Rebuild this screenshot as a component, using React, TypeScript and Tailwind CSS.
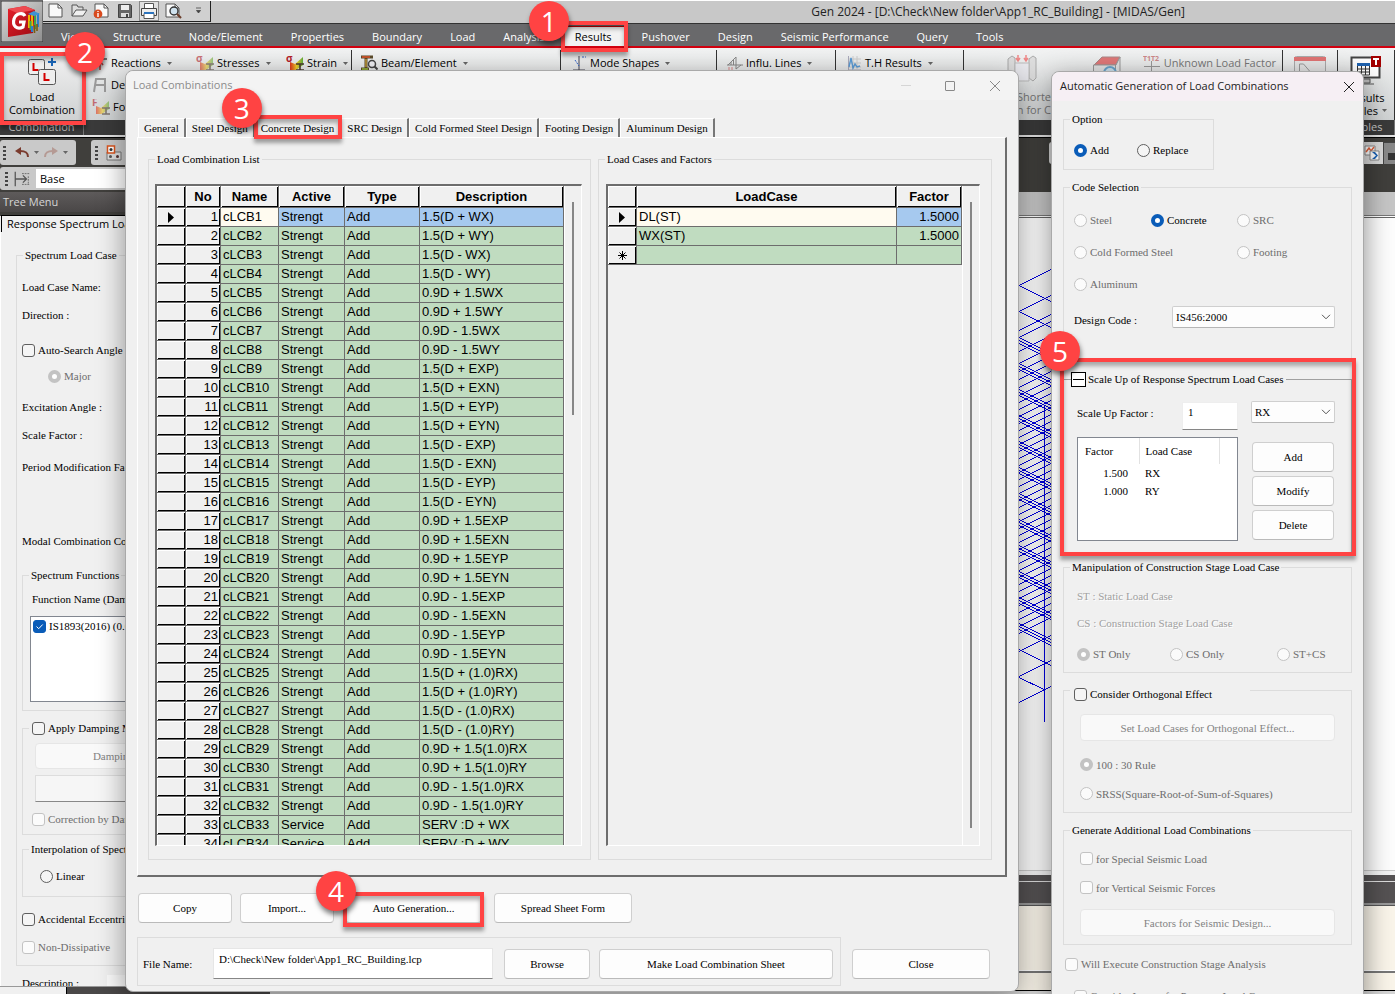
import React from "react";

const SERIF = "font-['Liberation_Serif',serif]";
const UI = "font-['Open_Sans',sans-serif]";
const GRID = "font-['Liberation_Sans',sans-serif]";

/* ---------- shared controls ---------- */

interface CalloutProps {
  n: number;
  box: string;
  badge: string;
}

const Callout: React.FC<CalloutProps> = ({ n, box, badge }) => (
  <div
    className={`pointer-events-none absolute z-30 border-4 border-[#ff4343] shadow-[0_4px_4px_rgba(0,0,0,0.35),inset_0_4px_4px_rgba(0,0,0,0.3)] ${box}`}
  >
    <span
      className={`absolute flex size-10 items-center justify-center rounded-full bg-[#ff4343] font-['Open_Sans',sans-serif] text-[28px] leading-none text-white shadow-[1px_4px_5px_rgba(0,0,0,0.5)] ${badge}`}
    >
      {n}
    </span>
  </div>
);

interface CheckProps {
  label: string;
  type?: "radio" | "checkbox";
  name?: string;
  checked?: boolean;
  disabled?: boolean;
  className?: string;
}

const Check: React.FC<CheckProps> = ({
  label,
  type = "checkbox",
  name,
  checked,
  disabled,
  className = "",
}) => {
  const shape =
    type === "radio"
      ? "rounded-full checked:border-4 checked:bg-white"
      : "rounded-[3px] checked:bg-[#0a5cb8]";
  const tone = disabled
    ? "border-[#c3c3c3] bg-[#fbfbfb]"
    : "border-[#5f5f5f] bg-[#f5f5f5] checked:border-[#0a5cb8]";
  return (
    <label
      className={`flex h-4 items-center gap-[3px] whitespace-nowrap ${disabled ? "text-[#6d6d6d]" : "text-black"} ${className}`}
    >
      <span className="relative flex">
        <input
          type={type}
          name={name}
          defaultChecked={checked}
          disabled={disabled}
          className={`size-[13px] shrink-0 appearance-none border ${shape} ${tone}`}
        />
        {type === "checkbox" && checked && (
          <svg viewBox="0 0 13 13" className="absolute inset-0 size-[13px]">
            <path d="M3.5 6.5l2.2 2.2 4-4.2" fill="none" stroke="#fff" />
          </svg>
        )}
      </span>
      {label}
    </label>
  );
};

const PushButton: React.FC<{
  children: React.ReactNode;
  disabled?: boolean;
  className?: string;
}> = ({ children, disabled, className = "" }) => (
  <button
    type="button"
    disabled={disabled}
    className={`rounded-[4px] border text-center whitespace-nowrap ${
      disabled
        ? "border-[#e6e6e6] bg-[#f9f9f9] text-[#838383]"
        : "border-[#cfcfcf] border-b-[#bababa] bg-[#fdfdfd]"
    } ${className}`}
  >
    {children}
  </button>
);

const Group: React.FC<{
  title: React.ReactNode;
  className?: string;
  legend?: string;
  body?: string;
  children?: React.ReactNode;
}> = ({ title, className = "", legend = "", body = "", children }) => (
  <fieldset className={`min-w-0 border border-[#dcdcdc] ${className}`}>
    <legend className={`ml-[6px] px-[2px] leading-4 whitespace-nowrap ${legend}`}>
      {title}
    </legend>
    <div className={body}>{children}</div>
  </fieldset>
);

const Dropdown: React.FC<{ label: string; value: string; className?: string }> = ({
  label,
  value,
  className = "",
}) => (
  <span className={`relative flex ${className}`}>
    <select
      aria-label={label}
      className="h-[22px] w-full appearance-none rounded-[2px] border border-[#cfcfcf] border-b-[#b5b5b5] bg-[#fdfdfd] pl-[3px]"
    >
      <option>{value}</option>
    </select>
    <svg viewBox="0 0 10 6" className="absolute top-2 right-1 h-[6px] w-[10px]">
      <path d="M1 .8l4 4 4-4" fill="none" stroke="#555" />
    </svg>
  </span>
);

const Arrow: React.FC<{ className?: string }> = ({ className = "" }) => (
  <svg viewBox="0 0 5 3" className={`h-[3px] w-[5px] shrink-0 ${className}`}>
    <path d="M0 0h5L2.5 3z" fill="#666" />
  </svg>
);

/* ---------- main window ---------- */

const AppLogo = () => (
  <svg viewBox="0 0 42 41" className="h-[41px] w-[42px]">
    <defs>
      <linearGradient id="logoBg" x1="0" y1="0" x2="1" y2="1">
        <stop offset="0" stopColor="#dcdcdc" />
        <stop offset="1" stopColor="#8e8e8e" />
      </linearGradient>
      <linearGradient id="logoRed" x1="0" y1="0" x2="1" y2="1">
        <stop offset="0" stopColor="#e5202b" />
        <stop offset="1" stopColor="#9d0c14" />
      </linearGradient>
    </defs>
    <rect width="42" height="41" fill="url(#logoBg)" stroke="#333" />
    <path d="M7 8l17-3 10 4-2 23-25 4z" fill="url(#logoRed)" />
    <path d="M7 8l17-3 10 4-18 3z" fill="#ee4a50" />
    <path
      d="M24 15c-2-4-9-3-11 3-2 7 3 11 9 8l1-5h-5"
      fill="none"
      stroke="#fff"
      strokeWidth="3.2"
    />
    <path d="M28 14v13M31 12v14" stroke="#f0b400" strokeWidth="2" />
    <path d="M34 11v17M29.500 20v9" stroke="#3da34a" strokeWidth="2" />
    <path d="M37 12v14M31 25v6" stroke="#2a7fd0" strokeWidth="2" />
    <path d="M33.500 24v8M36 23v7" stroke="#7a5a10" strokeWidth="1.600" />
    <path d="M27 13l6-3 6 3-6 2z" fill="#3f93d4" />
  </svg>
);

const FilePage: React.FC<{ children?: React.ReactNode }> = ({ children }) => (
  <svg viewBox="0 0 18 16" className="h-4 w-[18px]">
    <path d="M2 1h9l4 4v9H2z" fill="#fafafa" stroke="#555" />
    <path d="M11 1v4h4" fill="none" stroke="#555" />
    {children}
  </svg>
);

const QuickAccess = () => (
  <div className="flex h-[21px] items-start gap-[5px] border-r border-b border-[#222] bg-[#d0d0d0] pt-[2px] pr-2 pl-[4px]">
    <FilePage />
    <svg viewBox="0 0 18 16" className="h-4 w-[18px]">
      <path d="M2 13V2h5l1 2h5v3" fill="#ddd" stroke="#555" />
      <path d="M2 13l4-6h11l-4 6z" fill="#f0f0f0" stroke="#555" />
    </svg>
    <FilePage>
      <circle cx="5" cy="11" r="4.4" fill="#d94a1e" />
      <path d="M5 10v4M5 8v1" stroke="#fff" strokeWidth="1.4" />
    </FilePage>
    <svg viewBox="0 0 18 16" className="h-4 w-[18px]">
      <path d="M2.500 1.500h12l1 1v12h-13z" fill="#666" stroke="#444" />
      <path d="M5 2h8v5H5z" fill="#eee" />
      <path d="M5 10h8v4H5z" fill="#ddd" />
      <path d="M10 11h2v3h-2z" fill="#444" />
    </svg>
    <span className="-my-[2px] flex h-5 border border-[#888] bg-[#e0e0e0] pt-px">
      <svg viewBox="0 0 18 16" className="h-4 w-[18px]">
        <path d="M4.500 5.500v-5h9v5" fill="#fff" stroke="#555" />
        <path d="M1.500 5.500h15v7h-15z" fill="#eee" stroke="#444" />
        <path d="M4 10.500h10v5H4z" fill="#fff" stroke="#555" />
        <path d="M4 9h10v2H4z" fill="#2b73bd" />
      </svg>
    </span>
    <FilePage>
      <circle cx="10" cy="8" r="4" fill="#cfe2ee" stroke="#333" strokeWidth="1.4" />
      <path d="M13 11l4 4" stroke="#6b3d2a" strokeWidth="2.2" />
    </FilePage>
    <svg viewBox="0 0 7 7" className="mt-[4px] ml-2 h-[7px] w-[7px]">
      <path d="M1 1h5M1.500 3.500h4L3.500 6z" fill="#444" stroke="#444" strokeWidth=".8" />
    </svg>
  </div>
);

const menuTabs = [
  "View",
  "Structure",
  "Node/Element",
  "Properties",
  "Boundary",
  "Load",
  "Analysis",
  "Results",
  "Pushover",
  "Design",
  "Seismic Performance",
  "Query",
  "Tools",
];

const TitleArea = () => (
  <header className="relative z-[1] flex h-12 shrink-0 border-b-2 border-[#d2000f] bg-[#69696b]">
    <div className="h-[43px] shrink-0 pt-px pl-px">
      <AppLogo />
    </div>
    <div className="min-w-0 flex-1">
      <div className="flex h-6 border-t border-b border-t-white border-b-[#333] bg-[#c8c8c8]">
        <QuickAccess />
        <h1 className="ml-auto pt-[2px] pr-[210px] text-[12px] leading-[18px] whitespace-nowrap text-[#222]">
          Gen 2024 - [D:\Check\New folder\App1_RC_Building] - [MIDAS/Gen]
        </h1>
      </div>
      <nav className="flex h-[22px] items-stretch pl-1 text-[11px] text-white">
        {menuTabs.map((tab) =>
          tab === "Results" ? (
            <div key={tab} className="relative mx-1 pt-[2px]">
              <button
                type="button"
                className="h-full border-t border-[#b00] bg-[#f2f2f2] px-3 pt-px text-black"
              >
                {tab}
              </button>
              <Callout
                n={1}
                box="-left-[2px] -right-1 -top-[3px] h-[31px]"
                badge="-left-9 -top-6"
              />
            </div>
          ) : (
            <button type="button" key={tab} className="px-[14px] pt-[4px] whitespace-nowrap">
              {tab}
            </button>
          )
        )}
      </nav>
    </div>
  </header>
);

const StressIcon: React.FC<{ letter: string; faded?: boolean }> = ({ letter, faded }) => (
  <svg viewBox="0 0 18 16" className={`h-4 w-[18px] ${faded ? "opacity-60" : ""}`}>
    <defs>
      <linearGradient id="stressRamp">
        <stop offset="0" stopColor="#e0301f" />
        <stop offset=".5" stopColor="#f4cf2a" />
        <stop offset="1" stopColor="#5fae3c" />
      </linearGradient>
    </defs>
    <path d="M4 7l5 2 8-7v8l-7 5H4z" fill="url(#stressRamp)" />
    <path d="M10 9h8M14 9v6M10 15h8" stroke="#4a3a2e" strokeWidth="1.600" />
    <text x="0" y="7" fontSize="10" fontWeight="bold" fill="#b3202a">
      {letter}
    </text>
  </svg>
);

const RibbonItem: React.FC<{
  icon: React.ReactNode;
  label: string;
  arrow?: boolean;
  className?: string;
}> = ({ icon, label, arrow = true, className = "" }) => (
  <button type="button" className={`flex h-[22px] items-center gap-[3px] whitespace-nowrap ${className}`}>
    {icon}
    {label}
    {arrow && <Arrow className="ml-[3px]" />}
  </button>
);

const RibbonGroup: React.FC<{
  className: string;
  title?: string;
  children?: React.ReactNode;
}> = ({ className, title, children }) => (
  <section className={`flex shrink-0 flex-col ${className}`}>
    <div className="mt-[2px] h-[70px] border-r border-[#333]">{children}</div>
    <h2 className="h-[15px] border-r border-[#777] bg-[#3a3a3a] text-center text-[11px] leading-[14px] text-[#c8c8c8]">
      {title}
    </h2>
  </section>
);

const Ribbon = () => (
  <div className="relative flex h-[87px] shrink-0 bg-linear-to-b from-[#f2f3f3] to-[#c9cccd] text-[11px]">
    <section className="relative flex w-[84px] shrink-0 flex-col">
      <button
        type="button"
        className="flex h-[72px] flex-col items-center bg-linear-to-b from-[#f4f4f4] to-[#cfd1d2] pt-[8px] leading-[13px]"
      >
        <svg viewBox="0 0 30 30" className="mb-[4px] h-[30px] w-[30px] shrink-0">
          <rect x="1.500" y="3.500" width="16" height="15" rx="2" fill="#eee" stroke="#555" />
          <path d="M6.500 7v7h5" fill="none" stroke="#d40000" strokeWidth="2" />
          <rect x="11.500" y="13.500" width="17" height="15" rx="2" fill="#eee" stroke="#555" />
          <path d="M17.500 17v7h5" fill="none" stroke="#d40000" strokeWidth="2" />
          <path d="M25 2v8M21 6h8" stroke="#1a66b8" strokeWidth="2" />
        </svg>
        <span>
          Load
          <br />
          Combination
        </span>
      </button>
      <h2 className="h-[15px] border-r border-[#777] bg-[#3a3a3a] text-center text-[11px] leading-[14px] text-[#c8c8c8]">
        Combination
      </h2>
      <Callout n={2} box="left-0 top-1 h-[73px] w-[86px]" badge="left-[61px] -top-6" />
    </section>
    <RibbonGroup className="w-[268px]">
      <div className="flex pt-[2px] pl-2">
        <div className="w-[104px]">
          <RibbonItem
            label="Reactions"
            icon={
              <svg viewBox="0 0 16 16" className="h-4 w-4">
                <path d="M2 4h13" stroke="#555" strokeWidth="1.5" />
                <path d="M8 15V7M5 10l3-4 3 4" fill="none" stroke="#c44" strokeWidth="1.600" />
              </svg>
            }
          />
          <RibbonItem
            label="Deformations"
            icon={
              <svg viewBox="0 0 16 16" className="h-4 w-4">
                <path d="M2 15l2-13h9v13M3 8h10" fill="none" stroke="#999" strokeWidth="2" />
              </svg>
            }
          />
          <RibbonItem label="Forces" icon={<StressIcon letter="F" faded />} />
        </div>
        <RibbonItem label="Stresses" className="w-[90px]" icon={<StressIcon letter="σ" faded />} />
        <RibbonItem label="Strain" icon={<StressIcon letter="σ" />} />
      </div>
    </RibbonGroup>
    <RibbonGroup className="w-[209px]">
      <RibbonItem
        label="Beam/Element"
        className="mt-[2px] ml-2"
        icon={
          <svg viewBox="0 0 18 16" className="h-4 w-[18px]">
            <path d="M1 2h12M1 14h8M6 2v12" stroke="#5b4a2a" strokeWidth="3" />
            <path d="M2 2h8" stroke="#e2552a" strokeWidth="1.500" />
            <path d="M2 14h6" stroke="#9bc23c" strokeWidth="1.500" />
            <path d="M6 4v8" stroke="#f0c040" />
            <circle cx="12" cy="9" r="3.500" fill="#f0f0f4" stroke="#444" strokeWidth="1.500" />
            <path d="M14.500 11.500l3 3" stroke="#444" strokeWidth="2" />
          </svg>
        }
      />
    </RibbonGroup>
    <RibbonGroup className="w-[156px]">
      <RibbonItem
        label="Mode Shapes"
        className="mt-[2px] ml-[10px]"
        icon={
          <svg viewBox="0 0 16 16" className="h-4 w-4">
            <path d="M8 1v14M2 15h12" stroke="#445" />
            <path d="M4 5l4 6M11 2h4" stroke="#36c" strokeDasharray="2 1" />
          </svg>
        }
      />
    </RibbonGroup>
    <RibbonGroup className="w-[119px]">
      <RibbonItem
        label="Influ. Lines"
        className="mt-[2px] ml-[10px]"
        icon={
          <svg viewBox="0 0 16 16" className="h-4 w-4">
            <path d="M0 10h16M1 10l8-8v12l5-4M4 7v3M6.500 5v5" fill="none" stroke="#888" />
            <path d="M2 12v4M5 12v4" stroke="#d88" />
          </svg>
        }
      />
    </RibbonGroup>
    <RibbonGroup className="w-[128px]">
      <RibbonItem
        label="T.H Results"
        className="mt-[2px] ml-[10px]"
        icon={
          <svg viewBox="0 0 16 16" className="h-4 w-4">
            <path d="M3 4h12M3 8h12M3 12h12M7 1v13M11 1v13" stroke="#ccc" />
            <path d="M2.500 1v14H15" fill="none" stroke="#aab" />
            <path d="M3 12l2-9 2 10 2-4 2 3 3-1" fill="none" stroke="#5b9bd5" strokeWidth="1.400" />
          </svg>
        }
      />
    </RibbonGroup>
    <RibbonGroup className="min-w-[319px] flex-1">
      <div className="flex pr-[6px] pl-[20px] text-[#777]">
        <div className="w-[67px] pt-[3px] text-right leading-[13px] whitespace-nowrap">
          <svg viewBox="0 0 32 32" className="mr-[13px] ml-auto block h-8 w-8">
            <path d="M2 6l4-3 3 2v20l-3 3-4-3zM23 6l4-3 3 2v20l-3 3-4-3z" fill="#ddd" stroke="#aaa" />
            <path d="M9 10h14v18H9z" fill="#e9e9ee" stroke="#bbb" />
            <path d="M12 2v6M20 2v6M10 5l2 3 2-3M18 5l2 3 2-3" fill="none" stroke="#e88" strokeWidth="1.500" />
          </svg>
          <p className="pt-[5px]">Shorte</p>
          <p>n for C</p>
        </div>
        <svg viewBox="0 0 32 32" className="mt-1 ml-10 h-8 w-8">
          <path d="M3 11l8-8h18l-4 8z" fill="#e07878" stroke="#a88" />
          <path d="M2.500 11h22v18h-22zM25 11l4-8v18" fill="#e4e4e4" stroke="#999" />
          <circle cx="19" cy="19" r="6" fill="#cfe4f0" stroke="#6aa5cc" strokeWidth="2" />
        </svg>
        <RibbonItem
          label="Unknown Load Factor"
          arrow={false}
          className="mt-[2px] ml-auto"
          icon={
            <svg viewBox="0 0 18 18" className="h-[18px] w-[18px]">
              <text x="0" y="7" fontSize="7" fill="#c88" fontWeight="bold">
                T1T2
              </text>
              <path d="M8.500 7v11M1 12.500h16" stroke="#999" />
            </svg>
          }
        />
      </div>
    </RibbonGroup>
    <RibbonGroup className="w-[55px]">
      <svg viewBox="0 0 32 32" className="mx-auto mt-[6px] block h-8 w-8">
        <rect x=".5" y=".5" width="31" height="31" rx="2" fill="#e6e6e6" stroke="#aaa" />
        <path d="M0 1h32v4H0z" fill="#e07474" />
        <path d="M5.500 8v16M5.500 8h4l6 7" fill="none" stroke="#999" />
      </svg>
    </RibbonGroup>
    <RibbonGroup className="w-[57px]" title="Tables">
      <div className="flex flex-col items-center pt-[5px] leading-[13px]">
        <svg viewBox="0 0 32 32" className="mb-[4px] h-8 w-8">
          <path d="M1.500 2.500h28v20h-28z" fill="#fff" stroke="#444" strokeWidth="2" />
          <path d="M12 24h8v4h-8zM8 29h16" fill="#bbb" stroke="#555" />
          <path d="M7 8h13v3H7z" fill="#1f63b0" />
          <path d="M7.500 11v9h12v-9M7 14h13M7 17h13M11.500 11v9M15.500 11v9" fill="none" stroke="#333" />
          <path d="M21 1h10v11H21z" fill="#a40000" />
          <path d="M23 4h6M26 4v6" stroke="#fff" strokeWidth="2" />
        </svg>
        <span>Results</span>
        <span className="flex items-center gap-1">
          Tables <Arrow />
        </span>
      </div>
    </RibbonGroup>
  </div>
);

const Grip = () => (
  <span className="flex w-[3px] flex-col gap-[2px]">
    <i className="h-[2px] bg-[#444]" />
    <i className="h-[2px] bg-[#444]" />
    <i className="h-[2px] bg-[#444]" />
    <i className="h-[2px] bg-[#444]" />
  </span>
);

const Toolbars = () => (
  <div className="shrink-0 border-t-2 border-[#e3e3e3] bg-[#403f3c] pb-[2px]">
    <div className="flex h-[30px] items-center justify-between border-t border-black">
      <div className="flex gap-[15px]">
        <div className="flex h-[25px] w-[76px] items-center gap-[5px] rounded-[3px] bg-[#c9c9c9] pl-[3px]">
          <Grip />
          <svg viewBox="0 0 14 11" className="ml-1 h-[11px] w-[14px]">
            <path d="M13 10c0-5-3-6-8-6" fill="none" stroke="#7a3b2e" strokeWidth="2" />
            <path d="M6 0v8L0 4z" fill="#7a3b2e" />
          </svg>
          <Arrow />
          <svg viewBox="0 0 14 11" className="h-[11px] w-[14px]">
            <path d="M1 10c0-5 3-6 8-6" fill="none" stroke="#b59a94" strokeWidth="2" />
            <path d="M8 0v8l6-4z" fill="#b59a94" />
          </svg>
          <Arrow />
        </div>
        <div className="flex h-[25px] w-[120px] items-center gap-2 rounded-[3px] bg-[#c9c9c9] pl-[4px]">
          <Grip />
          <svg viewBox="0 0 16 16" className="h-4 w-4">
            <path d="M1 7h14v8H1z" fill="#ddd" stroke="#777" />
            <path d="M1.500 1h7v7h-7z" fill="#fff" stroke="#d9541e" strokeWidth="1.500" />
            <circle cx="5" cy="4.500" r="1.500" fill="#333" />
            <circle cx="4.500" cy="11.500" r="1.500" fill="#555" />
            <circle cx="11.500" cy="11.500" r="1.500" fill="#533" />
          </svg>
        </div>
      </div>
      <div className="flex h-[22px] w-[346px] items-center justify-end gap-[3px] rounded-[3px] bg-[#d9d9d9]">
        <svg viewBox="0 0 16 16" className="h-4 w-4">
          <path d="M1 1h10v9H1z" fill="#fff" stroke="#888" />
          <path d="M2 7l3-4 2 3 3-4" fill="none" stroke="#e0603a" strokeWidth="1.500" />
          <path d="M6 6h9v9H6z" fill="#fff" stroke="#888" />
          <path d="M8 7l4 3.500L8 14h3l3-3.500L11 7z" fill="#1e63b4" />
        </svg>
        <span className="flex h-[22px] w-3 items-end border-t border-l border-[#444] bg-[#888] pb-1 pl-1">
          <i className="h-[7px] w-2 bg-[#333]" />
        </span>
      </div>
    </div>
    <div className="flex h-[23px] w-[420px] items-center gap-[5px] rounded-[3px] bg-[#c9c9c9] pl-[5px]">
      <Grip />
      <svg viewBox="0 0 20 16" className="h-4 w-[18px]">
        <path d="M2.500 0v16M2 8h13M11 4l4 4-4 4" fill="none" stroke="#555" strokeWidth="1.400" />
        <path d="M10 2h8M10 14h8M17 5v8" stroke="#666" strokeDasharray="2 1" />
      </svg>
      <input
        aria-label="Named stage"
        defaultValue="Base"
        className="h-[19px] w-[250px] bg-white pl-1 text-[11px]"
      />
    </div>
  </div>
);

const TreePanel = () => (
  <aside className="flex w-[270px] shrink-0 flex-col bg-[#f0f0f0]">
    <h2 className="h-[20px] shrink-0 bg-linear-to-b from-[#5e5b5b] to-[#4a4747] pl-[3px] text-[11px] leading-[19px] text-[#d5d5d5]">
      Tree Menu
    </h2>
    <div className="flex h-[20px] shrink-0 bg-linear-to-b from-[#403f3c] from-20% to-[#f0f0f0] to-20% pt-[3px] pl-px">
      <button
        type="button"
        className="border-t border-l border-black bg-[#f0f0f0] px-[5px] text-[11px] leading-4 whitespace-nowrap"
      >
        Response Spectrum Load Cases
      </button>
    </div>
    <div
      className={`flex-1 overflow-hidden border-l border-[#fff] pl-[15px] text-[11px] leading-4 whitespace-nowrap ${SERIF}`}
    >
      <Group title="Spectrum Load Case" className="mt-[15px] h-[719px] w-[245px]" body="pl-[5px]">
        <p className="pt-[16px]">Load Case Name:</p>
        <p className="pt-3">Direction :</p>
        <Check label="Auto-Search Angle" className="mt-[19px]" />
        <Check label="Major" type="radio" name="angle" checked disabled className="mt-[10px] ml-[26px]" />
        <p className="pt-[15px]">Excitation Angle :</p>
        <p className="pt-3">Scale Factor :</p>
        <p className="pt-4">Period Modification Factor :</p>
        <p className="pt-[58px]">Modal Combination Control</p>
        <Group title="Spectrum Functions" className="mt-[18px] h-[144px] w-[228px]" body="px-[7px]">
          <p className="pt-2 pl-[2px]">Function Name (Damping Ratio)</p>
          <div className="mt-[9px] h-[86px] border border-[#828790] bg-white pt-px pl-[2px]">
            <Check label="IS1893(2016) (0.05)" checked />
          </div>
        </Group>
        <Group
          title={<Check label="Apply Damping Method" />}
          legend="pl-[3px]"
          className="mt-[9px] h-[115px] w-[228px]"
          body="px-3 pt-[7px]"
        >
          <PushButton disabled className="block h-[26px] w-full">
            Damping Method...
          </PushButton>
          <div className="mt-[6px] h-[27px] border border-[#ddd] border-b-[#888] bg-[#f6f6f6]" />
          <Check label="Correction by Damping Ratio" disabled className="mt-[9px] -ml-[3px]" />
        </Group>
        <Group title="Interpolation of Spectral Data" className="mt-[6px] h-[56px] w-[228px]" body="pl-[17px]">
          <Check label="Linear" type="radio" name="interp" className="mt-[11px]" />
        </Group>
        <Check label="Accidental Eccentricity" className="mt-[14px]" />
        <Check label="Non-Dissipative" disabled className="mt-3" />
      </Group>
      <div className="flex gap-7 pt-[9px] pl-[6px]">
        Description :
        <span className="h-5 w-[100px] bg-[#fafafa]" />
      </div>
    </div>
    <div className="flex h-2 shrink-0 border-t border-[#999] bg-[#4a4848]">
      <span className="w-[67px] border-r border-black bg-[#f0f0f0]" />
    </div>
  </aside>
);

const rising = [286, 312, 331, 338, 352, 364, 372, 380, 388];
for (let y = 396; y < 640; y += 7) rising.push(y);
rising.push(652, 677, 703);
const storeys = Array.from({ length: 15 }, (_, i) => 285 + i * 26);

const Wireframe = () => (
  <svg
    viewBox="1018 260 34 470"
    className="absolute top-[42px] left-[748px] h-[470px] w-[34px]"
    shapeRendering="crispEdges"
    fill="none"
    stroke="#0000e0"
  >
    {rising.map((y) => (
      <path key={y} d={`M1018 ${y}l34 -17`} />
    ))}
    {storeys.map((y, i) => (
      <path
        key={y}
        d={i < 2 || i > 13 ? `M1018 ${y}l34 17` : `M1018 ${y}l34 17M1018 ${y + 3}l34 17M1018 ${y + 6}l34 17`}
      />
    ))}
    <path d="M1018 677l27 13M1044.500 406v316" />
  </svg>
);

const Workspace = () => (
  <main className="flex min-w-0 flex-1 flex-col">
    <div className="h-[23px] shrink-0 bg-[#c6c6c6]" />
    <div className="h-[3px] shrink-0 border-t border-b border-t-[#777] border-b-[#666] bg-white" />
    <div className="relative flex-1 overflow-hidden bg-[#fdfdfd]">
      <Wireframe />
    </div>
    <div className="h-[5px] shrink-0 border-t border-[#ccc] bg-[#f4f4f4]" />
    <div className="h-[28px] shrink-0 bg-[#555253] pt-[6px]">
      <div className="h-px bg-[#ddd]" />
    </div>
    <div className="h-[3px] shrink-0 border-b border-[#555] bg-[#999]" />
    <div className="h-[64px] shrink-0 bg-[#faf5ea]" />
    <div className="h-[3px] shrink-0 border-b-2 border-[#777] bg-white" />
    <div className="h-[18px] shrink-0 border-b border-black bg-[#faf5ea]" />
    <div className="h-[3px] shrink-0 bg-[#d6d6d6]" />
  </main>
);

/* ---------- Load Combinations window ---------- */

const seismic = ["EXP", "EXN", "EYP", "EYN"];
const descriptions = [
  "1.5(D + WX)",
  "1.5(D + WY)",
  "1.5(D - WX)",
  "1.5(D - WY)",
  "0.9D + 1.5WX",
  "0.9D + 1.5WY",
  "0.9D - 1.5WX",
  "0.9D - 1.5WY",
  ...seismic.map((s) => `1.5(D + ${s})`),
  ...seismic.map((s) => `1.5(D - ${s})`),
  ...seismic.map((s) => `0.9D + 1.5${s}`),
  ...seismic.map((s) => `0.9D - 1.5${s}`),
  "1.5(D + (1.0)RX)",
  "1.5(D + (1.0)RY)",
  "1.5(D - (1.0)RX)",
  "1.5(D - (1.0)RY)",
  "0.9D + 1.5(1.0)RX",
  "0.9D + 1.5(1.0)RY",
  "0.9D - 1.5(1.0)RX",
  "0.9D - 1.5(1.0)RY",
  "SERV :D + WX",
  "SERV :D + WY",
];

const headCell =
  "border-r border-b border-[#6d6d6d] bg-[#f0f0f0] shadow-[inset_1px_1px_0_#fff,inset_-1px_-1px_0_#000]";
const bodyCell = "border-r border-b border-[#6d6d6d] px-[2px] whitespace-nowrap";

const RowMarker = () => (
  <svg viewBox="0 0 6 11" className="mx-auto block h-[11px] w-[6px]">
    <path d="M0 0l6 5.500L0 11z" />
  </svg>
);

const Sheet: React.FC<{ thumb: string; children: React.ReactNode }> = ({ thumb, children }) => (
  <div
    className={`flex h-[662px] overflow-hidden border-t-2 border-r border-b border-l-2 border-t-[#6d6d6d] border-r-white border-b-white border-l-[#6d6d6d] text-[13px] leading-[18px] ${GRID}`}
  >
    <div className="min-w-0 flex-1">{children}</div>
    <div className="w-[17px] border-l border-white pt-[16px]">
      <div className={`ml-[7px] w-[2px] bg-[#868686] ${thumb}`} />
    </div>
  </div>
);

const CombinationTable = () => (
  <table className="w-full table-fixed border-separate border-spacing-0">
    <colgroup>
      <col className="w-[29px]" />
      <col className="w-[35px]" />
      <col className="w-[58px]" />
      <col className="w-[66px]" />
      <col className="w-[75px]" />
      <col />
    </colgroup>
    <thead>
      <tr className="h-[22px]">
        {["", "No", "Name", "Active", "Type", "Description"].map((h) => (
          <th key={h} className={headCell}>
            {h}
          </th>
        ))}
      </tr>
    </thead>
    <tbody>
      {descriptions.map((text, i) => {
        const fill = i === 0 ? "bg-[#a6c9ef]" : "bg-[#c0dcc0]";
        return (
          <tr key={text} className="h-[19px]">
            <td className={headCell}>{i === 0 && <RowMarker />}</td>
            <td className={`${headCell} pr-[2px] text-right`}>{i + 1}</td>
            <td className={`${bodyCell} ${i === 0 ? "bg-[#fffbf0]" : fill}`}>cLCB{i + 1}</td>
            <td className={`${bodyCell} ${fill}`}>{i < 32 ? "Strengt" : "Service"}</td>
            <td className={`${bodyCell} ${fill}`}>Add</td>
            <td className={`${bodyCell} ${fill}`}>{text}</td>
          </tr>
        );
      })}
    </tbody>
  </table>
);

const FactorTable = () => (
  <table className="w-full table-fixed border-separate border-spacing-0">
    <colgroup>
      <col className="w-[29px]" />
      <col />
      <col className="w-[65px]" />
    </colgroup>
    <thead>
      <tr className="h-[22px]">
        {["", "LoadCase", "Factor"].map((h) => (
          <th key={h} className={headCell}>
            {h}
          </th>
        ))}
      </tr>
    </thead>
    <tbody>
      <tr className="h-[19px]">
        <td className={headCell}>
          <RowMarker />
        </td>
        <td className={`${bodyCell} bg-[#fffbf0]`}>DL(ST)</td>
        <td className={`${bodyCell} bg-[#a6c9ef] text-right`}>1.5000</td>
      </tr>
      <tr className="h-[19px]">
        <td className={headCell} />
        <td className={`${bodyCell} bg-[#c0dcc0]`}>WX(ST)</td>
        <td className={`${bodyCell} bg-[#c0dcc0] text-right`}>1.5000</td>
      </tr>
      <tr className="h-[19px]">
        <td className={headCell}>
          <svg viewBox="0 0 9 9" className="mx-auto block size-[9px]">
            <path d="M4.500 0v9M0 4.500h9M1.500 1.500l6 6M7.500 1.500l-6 6" stroke="#000" />
          </svg>
        </td>
        <td className={`${bodyCell} bg-[#c0dcc0]`} />
        <td className={`${bodyCell} bg-[#c0dcc0]`} />
      </tr>
    </tbody>
  </table>
);

const codeTabs = [
  "General",
  "Steel Design",
  "Concrete Design",
  "SRC Design",
  "Cold Formed Steel Design",
  "Footing Design",
  "Aluminum Design",
];

const LoadCombinations = () => (
  <section className="absolute top-[70px] left-[125px] z-10 flex h-[922px] w-[894px] flex-col rounded-lg border border-[#a9a9a9] bg-[#f0f0f0] shadow-[0_8px_28px_rgba(0,0,0,0.4)]">
    <header className="flex h-[29px] shrink-0 items-center rounded-t-lg bg-[#f3f3f3] pr-[17px] pl-[7px]">
      <h2 className={`text-[11px] text-[#8c8c8c] ${UI}`}>Load Combinations</h2>
      <div className="ml-auto flex items-center gap-[34px]">
        <button type="button" aria-label="Minimize" className="h-px w-[10px] bg-[#d5d5d5]" />
        <button type="button" aria-label="Maximize" className="size-[10px] rounded-[1px] border border-[#888]" />
        <button type="button" aria-label="Close window">
          <svg viewBox="0 0 12 12" className="size-3">
            <path d="M1 1l10 10M11 1L1 11" stroke="#888" />
          </svg>
        </button>
      </div>
    </header>
    <div className={`px-[11px] text-[11px] leading-4 ${SERIF}`}>
      <div className="flex h-[37px] items-end pl-px">
        {codeTabs.map((tab) => (
          <div
            key={tab}
            className="relative flex h-[19px] border-t border-r-2 border-t-white border-r-[#777]"
          >
            <button type="button" className="border-l border-white px-[5px] whitespace-nowrap">
              {tab}
            </button>
            {tab === "Concrete Design" && (
              <Callout n={3} box="-left-px -right-[3px] -top-1 h-6" badge="-left-9 -top-[31px]" />
            )}
          </div>
        ))}
      </div>
      <div className="flex h-[740px] gap-[7px] border-t border-r-2 border-b-2 border-l border-t-white border-r-[#6d6d6d] border-b-[#6d6d6d] border-l-white pt-[13px] pr-[13px] pl-[10px]">
        <Group
          title="Load Combination List"
          className="h-[709px] w-[443px]"
          body="pt-[17px] pr-[8px] pl-[6px]"
        >
          <Sheet thumb="h-[213px]">
            <CombinationTable />
          </Sheet>
        </Group>
        <Group
          title="Load Cases and Factors"
          className="h-[709px] flex-1"
          body="pt-[17px] pr-[11px] pl-[7px]"
        >
          <Sheet thumb="h-[626px]">
            <FactorTable />
          </Sheet>
        </Group>
      </div>
      <div className="flex pt-4 pl-px">
        <PushButton className="h-[30px] w-[94px]">Copy</PushButton>
        <PushButton className="ml-2 h-[30px] w-[94px]">Import...</PushButton>
        <span className="relative ml-[11px]">
          <PushButton className="h-[30px] w-[137px]">Auto Generation...</PushButton>
          <Callout n={4} box="-left-[2px] -top-px h-[35px] w-[141px]" badge="-left-[31px] -top-[25px]" />
        </span>
        <PushButton className="ml-3 h-[30px] w-[138px]">Spread Sheet Form</PushButton>
      </div>
      <div className="mt-[14px] flex items-center gap-[11px]">
        <div className="flex h-[49px] w-[704px] items-center border border-[#dcdcdc] pt-[4px] pr-[7px] pl-[5px]">
          <label htmlFor="lcpFile" className="w-[70px]">
            File Name:
          </label>
          <input
            id="lcpFile"
            defaultValue="D:\Check\New folder\App1_RC_Building.lcp"
            className="h-[31px] w-[280px] border border-[#e6e6e6] border-b-[#868686] bg-white pb-[10px] pl-[5px]"
          />
          <PushButton className="ml-[11px] h-[30px] w-[86px]">Browse</PushButton>
          <PushButton className="ml-[9px] h-[30px] flex-1">Make Load Combination Sheet</PushButton>
        </div>
        <PushButton className="mt-[4px] h-[30px] w-[138px]">Close</PushButton>
      </div>
    </div>
  </section>
);

/* ---------- Automatic Generation window ---------- */

const AutoGeneration = () => (
  <section className="absolute top-[71px] left-[1051px] z-20 flex h-[940px] w-[313px] flex-col rounded-t-lg border border-[#a9a9a9] bg-[#f0f0f0] shadow-[0_8px_28px_rgba(0,0,0,0.45)]">
    <header className="flex h-[29px] shrink-0 items-center justify-between rounded-t-lg bg-[#f6eff4] pr-2 pl-2">
      <h2 className={`text-[11px] whitespace-nowrap text-[#222] ${UI}`}>
        Automatic Generation of Load Combinations
      </h2>
      <button type="button" aria-label="Close window">
        <svg viewBox="0 0 12 12" className="size-3">
          <path d="M1 1l10 10M11 1L1 11" stroke="#222" />
        </svg>
      </button>
    </header>
    <div className={`px-[11px] text-[11px] leading-4 ${SERIF}`}>
      <Group title="Option" className="mt-[10px] h-[59px] w-[151px]">
        <div className="flex gap-7 pt-[15px] pl-[10px]">
          <Check label="Add" type="radio" name="option" checked />
          <Check label="Replace" type="radio" name="option" />
        </div>
      </Group>

      <Group title="Code Selection" className="mt-[9px] h-[181px]" body="pl-[10px]">
        <div className="grid grid-cols-[77px_86px_1fr] pt-[9px]">
          <Check label="Steel" type="radio" name="code" disabled className="h-8" />
          <Check label="Concrete" type="radio" name="code" checked className="h-8" />
          <Check label="SRC" type="radio" name="code" disabled className="h-8" />
          <Check label="Cold Formed Steel" type="radio" name="code" disabled className="col-span-2 h-8" />
          <Check label="Footing" type="radio" name="code" disabled className="h-8" />
          <Check label="Aluminum" type="radio" name="code" disabled className="col-span-3 h-8" />
        </div>
        <div className="flex pt-[6px]">
          <span className="w-[98px] pt-[6px]">Design Code :</span>
          <Dropdown label="Design Code" value="IS456:2000" className="w-[163px]" />
        </div>
      </Group>

      <div className="relative mt-[11px]">
        <fieldset className="h-[182px] border border-[#a0a0a0] pl-[13px]">
          <legend className="ml-[-6px] flex h-4 items-center whitespace-nowrap">
            <label className="flex items-center">
              <span className="relative flex">
                <input
                  type="checkbox"
                  className="size-[15px] appearance-none border border-black bg-white"
                />
                <i className="absolute inset-x-[2px] top-[7px] h-px bg-black" />
              </span>
              <span className="px-[2px]">Scale Up of Response Spectrum Load Cases</span>
            </label>
          </legend>
          <div className="flex h-[50px] items-start pt-[14px]">
            <label htmlFor="scaleUp" className="w-[105px] pt-[4px]">
              Scale Up Factor :
            </label>
            <input
              id="scaleUp"
              defaultValue="1"
              className="mt-px h-[28px] w-[56px] border border-[#eee] border-b-[#868686] bg-white pb-2 pl-[5px]"
            />
            <Dropdown label="Scale up load case" value="RX" className="ml-[13px] w-[84px]" />
          </div>
          <div className="flex gap-[14px]">
            <div className="h-[104px] w-[161px] border border-[#828790] bg-white">
              <table className="table-fixed text-left leading-[18px]">
                <thead>
                  <tr className="h-[26px]">
                    <th className="w-[61px] border-r border-[#e2e2e2] pl-[7px] font-normal">Factor</th>
                    <th className="w-[80px] border-r border-[#e2e2e2] pl-[6px] font-normal">Load Case</th>
                  </tr>
                </thead>
                <tbody>
                  <tr>
                    <td className="pr-[11px] text-right">1.500</td>
                    <td className="pl-[6px]">RX</td>
                  </tr>
                  <tr>
                    <td className="pr-[11px] text-right">1.000</td>
                    <td className="pl-[6px]">RY</td>
                  </tr>
                </tbody>
              </table>
            </div>
            <div className="flex flex-col gap-1 pt-[5px]">
              <PushButton className="h-[30px] w-[82px]">Add</PushButton>
              <PushButton className="h-[30px] w-[82px]">Modify</PushButton>
              <PushButton className="h-[30px] w-[82px]">Delete</PushButton>
            </div>
          </div>
        </fieldset>
        <Callout
          n={5}
          box="-left-[3px] -right-1 -top-[13px] -bottom-[3px]"
          badge="-left-6 -top-[31px]"
        />
      </div>

      <Group
        title="Manipulation of Construction Stage Load Case"
        className="mt-[6px] h-[114px]"
        body="pl-[13px]"
      >
        <div className="pt-2 leading-[27px] text-[#a0a0a0] [text-shadow:1px_1px_0_#fff]">
          <p>ST : Static Load Case</p>
          <p>CS : Construction Stage Load Case</p>
        </div>
        <div className="grid grid-cols-[93px_107px_1fr]">
          <Check label="ST Only" type="radio" name="stage" checked disabled className="h-[34px]" />
          <Check label="CS Only" type="radio" name="stage" disabled className="h-[34px]" />
          <Check label="ST+CS" type="radio" name="stage" disabled className="h-[34px]" />
        </div>
      </Group>

      <Group
        title={<Check label="Consider Orthogonal Effect" />}
        legend="w-[180px] pt-2 pl-[4px]"
        className="mt-[5px] h-[135px]"
        body="px-4"
      >
        <PushButton disabled className="mt-3 block h-[27px] w-full">
          Set Load Cases for Orthogonal Effect...
        </PushButton>
        <div className="pt-[9px]">
          <Check label="100 : 30 Rule" type="radio" name="rule" checked disabled className="h-[29px]" />
          <Check
            label="SRSS(Square-Root-of-Sum-of-Squares)"
            type="radio"
            name="rule"
            disabled
            className="h-[29px]"
          />
        </div>
      </Group>

      <Group
        title="Generate Additional Load Combinations"
        className="mt-[9px] h-[123px]"
        body="px-4"
      >
        <div className="pt-[6px]">
          <Check label="for Special Seismic Load" disabled className="h-[29px]" />
          <Check label="for Vertical Seismic Forces" disabled className="h-[29px]" />
        </div>
        <PushButton disabled className="mt-[7px] block h-[27px] w-full">
          Factors for Seismic Design...
        </PushButton>
      </Group>

      <Check label="Will Execute Construction Stage Analysis" disabled className="mt-[11px] ml-[2px]" />
      <Check label="Consider Losses for Prestress Load Cases" disabled className="mt-4 ml-[11px]" />
    </div>
  </section>
);

export default function App() {
  return (
    <div className={`relative flex h-screen flex-col overflow-hidden bg-[#f0f0f0] text-black ${UI}`}>
      <TitleArea />
      <Ribbon />
      <Toolbars />
      <div className="flex min-h-0 flex-1">
        <TreePanel />
        <Workspace />
      </div>
      <LoadCombinations />
      <AutoGeneration />
    </div>
  );
}
